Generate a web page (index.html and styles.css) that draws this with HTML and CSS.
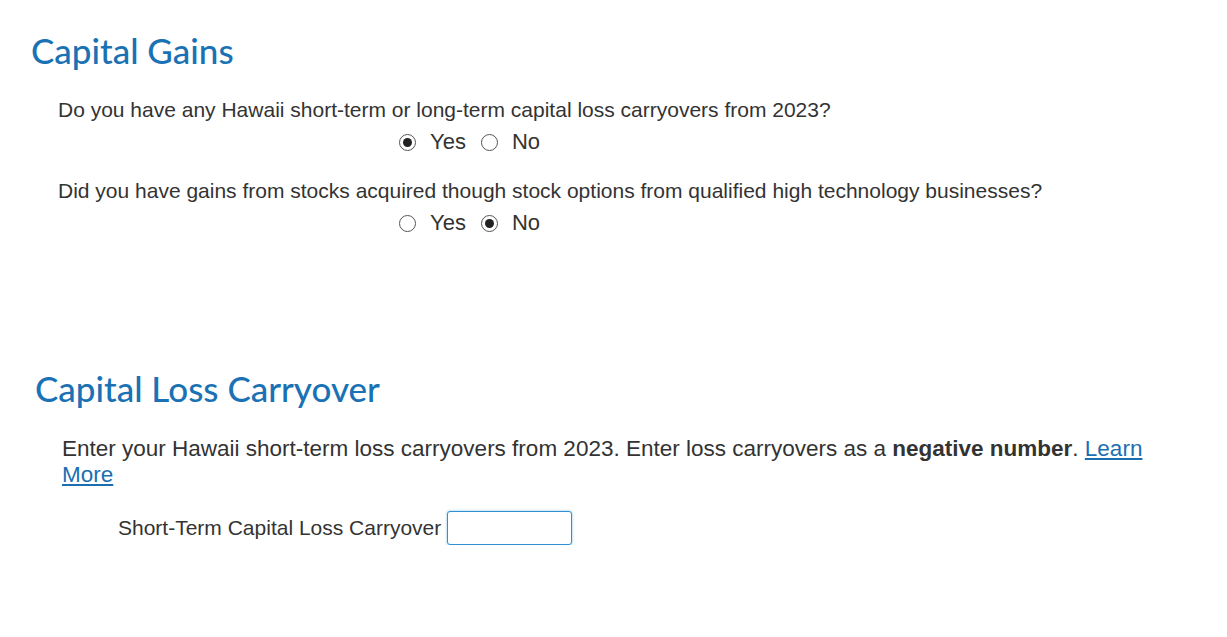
FILE: index.html
```html
<!DOCTYPE html>
<html lang="en">

<head>
    <meta charset="UTF-8">
    <meta name="viewport" content="width=device-width, initial-scale=1.0">
    <title>Capital Gains</title>
    <link rel="stylesheet" href="styles.css">
</head>

<body>
    <section class="section gains">
        <h1 class="title">Capital Gains</h1>

        <div class="question">
            <p class="prompt">Do you have any Hawaii short-term or long-term capital loss carryovers from 2023?</p>
            <div class="choices">
                <label class="choice"><input type="radio" name="carryover" checked> Yes</label>
                <label class="choice"><input type="radio" name="carryover"> No</label>
            </div>
        </div>

        <div class="question">
            <p class="prompt">Did you have gains from stocks acquired though stock options from qualified high technology businesses?</p>
            <div class="choices">
                <label class="choice"><input type="radio" name="hightech"> Yes</label>
                <label class="choice"><input type="radio" name="hightech" checked> No</label>
            </div>
        </div>
    </section>

    <section class="section loss">
        <h1 class="title">Capital Loss Carryover</h1>

        <p class="intro">Enter your Hawaii short-term loss carryovers from 2023. Enter loss carryovers as a <b>negative number</b>. <a href="#">Learn More</a></p>

        <div class="field">
            <label for="shortTerm">Short-Term Capital Loss Carryover</label>
            <input type="text" id="shortTerm" class="amount" autofocus>
        </div>
    </section>
</body>

</html>
```

FILE: styles.css
```css
body {
    margin: 0;
    font-family: "Liberation Sans", Arial, sans-serif;
    color: #333;
    background: #fff;
}

.section {
    display: flex;
    flex-direction: column;
}

.gains {
    padding: 28px 0 0 31px;
}

.loss {
    padding: 130px 0 0 35px;
}

/* Headings */

.title {
    margin: 0;
    font-family: Lato, "Open Sans", sans-serif;
    font-weight: 500;
    font-size: 35px;
    line-height: 44px;
    color: #1a72b5;
}

/* Radio questions */

.question {
    display: flex;
    flex-direction: column;
    padding-left: 27px;
}

.prompt {
    margin: 24px 0 0;
    font-size: 21px;
    line-height: 24px;
}

.question:first-of-type .prompt {
    margin-top: 26px;
}

.choices {
    display: flex;
    gap: 15px;
    padding-left: 341px;
    margin-top: 7px;
    font-size: 22px;
    line-height: 26px;
}

.choice {
    display: flex;
    align-items: center;
    gap: 14px;
}

.choice input {
    appearance: none;
    margin: 0;
    width: 17px;
    height: 17px;
    border: 1px solid #555;
    border-radius: 50%;
    display: grid;
    place-items: center;
}

.choice input:checked::after {
    content: "";
    width: 9px;
    height: 9px;
    border-radius: 50%;
    background: #222;
}

/* Carryover entry */

.intro {
    margin: 26px 0 0 27px;
    width: 1100px;
    font-size: 22.5px;
    line-height: 26px;
}

.intro a {
    color: #1b6fb0;
}

.field {
    display: flex;
    align-items: center;
    gap: 6px;
    margin: 23px 0 0 83px;
    font-size: 21px;
}

.amount {
    box-sizing: border-box;
    width: 125px;
    height: 34px;
    padding: 0 5px;
    border: 1px solid #2f8fd0;
    border-radius: 3px;
    box-shadow: 0 0 3px rgba(60, 160, 220, 0.6);
    outline: none;
    font: inherit;
}
```
